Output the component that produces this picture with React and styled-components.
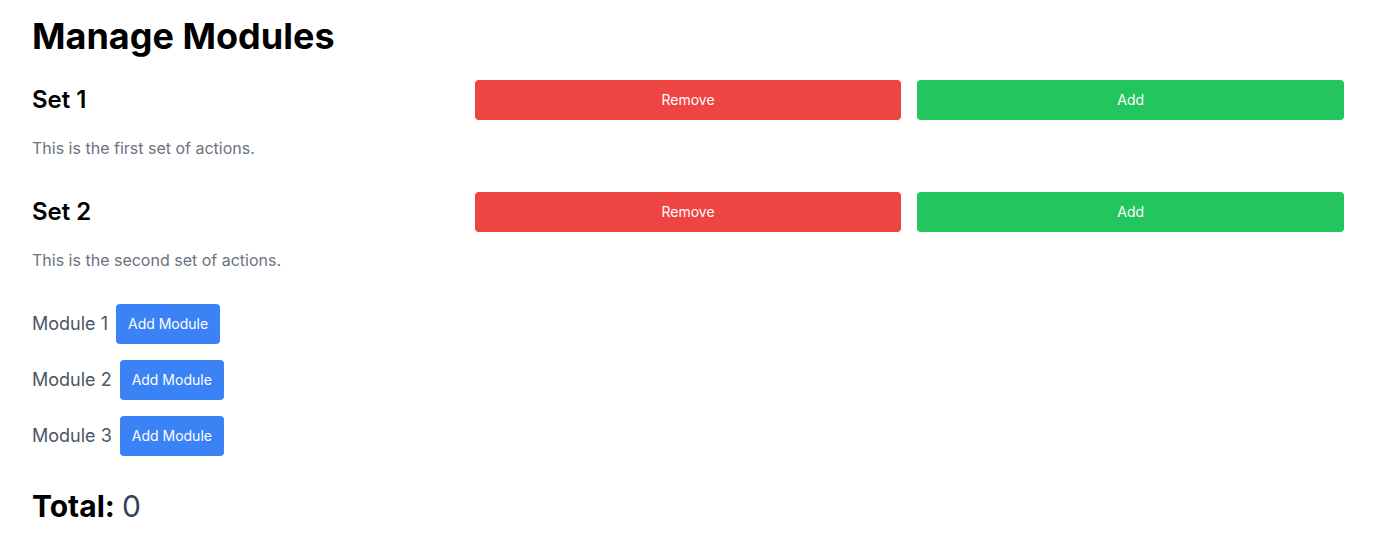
import React, { useState } from "react";
import styled, { createGlobalStyle } from "styled-components";

const GlobalStyle = createGlobalStyle`
  * { box-sizing: border-box; }
  body {
    margin: 0;
    background: #ffffff;
    font-family: Inter, "Noto Sans", sans-serif;
    color: #000000;
  }
`;

const Page = styled.div`
  padding: 16px 32px;
`;

const Title = styled.h1`
  margin: 0 0 24px;
  font-size: 36px;
  line-height: 40px;
  font-weight: 700;
`;

const SetBlock = styled.section`
  margin-bottom: 32px;
`;

const SetRow = styled.div`
  display: grid;
  grid-template-columns: repeat(3, 1fr);
  gap: 16px;
  align-items: center;
`;

const SetTitle = styled.h2`
  margin: 0;
  font-size: 24px;
  line-height: 32px;
  font-weight: 600;
`;

const Description = styled.p`
  margin: 16px 0 0;
  font-size: 16px;
  line-height: 24px;
  color: #6b7280;
`;

const colors = {
  red: "#ef4444",
  green: "#22c55e",
  blue: "#3b82f6",
};

const Button = styled.button`
  border: 0;
  border-radius: 4px;
  background: ${(p) => colors[p.$tone]};
  color: #ffffff;
  font-family: inherit;
  font-size: 14px;
  line-height: 20px;
  font-weight: 400;
  padding: 10px 12px;
  cursor: pointer;
`;

const ModuleList = styled.div`
  display: flex;
  flex-direction: column;
  gap: 16px;
  margin-bottom: 32px;
`;

const ModuleRow = styled.div`
  display: flex;
  align-items: center;
  gap: 8px;
`;

const ModuleLabel = styled.span`
  font-size: 18px;
  line-height: 28px;
  color: #4b5563;
`;

const Total = styled.h2`
  margin: 0;
  font-size: 30px;
  line-height: 36px;
  font-weight: 700;
`;

const TotalValue = styled.span`
  font-weight: 400;
  color: #374151;
`;

const sets = [
  { name: "Set 1", text: "This is the first set of actions." },
  { name: "Set 2", text: "This is the second set of actions." },
];

export default function App() {
  const [total, setTotal] = useState(0);

  return (
    <Page>
      <GlobalStyle />
      <Title>Manage Modules</Title>
      {sets.map((s) => (
        <SetBlock key={s.name}>
          <SetRow>
            <SetTitle>{s.name}</SetTitle>
            <Button $tone="red" onClick={() => setTotal((t) => Math.max(0, t - 1))}>
              Remove
            </Button>
            <Button $tone="green" onClick={() => setTotal((t) => t + 1)}>
              Add
            </Button>
          </SetRow>
          <Description>{s.text}</Description>
        </SetBlock>
      ))}
      <ModuleList>
        {[1, 2, 3].map((n) => (
          <ModuleRow key={n}>
            <ModuleLabel>Module {n}</ModuleLabel>
            <Button $tone="blue" onClick={() => setTotal((t) => t + 1)}>
              Add Module
            </Button>
          </ModuleRow>
        ))}
      </ModuleList>
      <Total>
        Total: <TotalValue>{total}</TotalValue>
      </Total>
    </Page>
  );
}
